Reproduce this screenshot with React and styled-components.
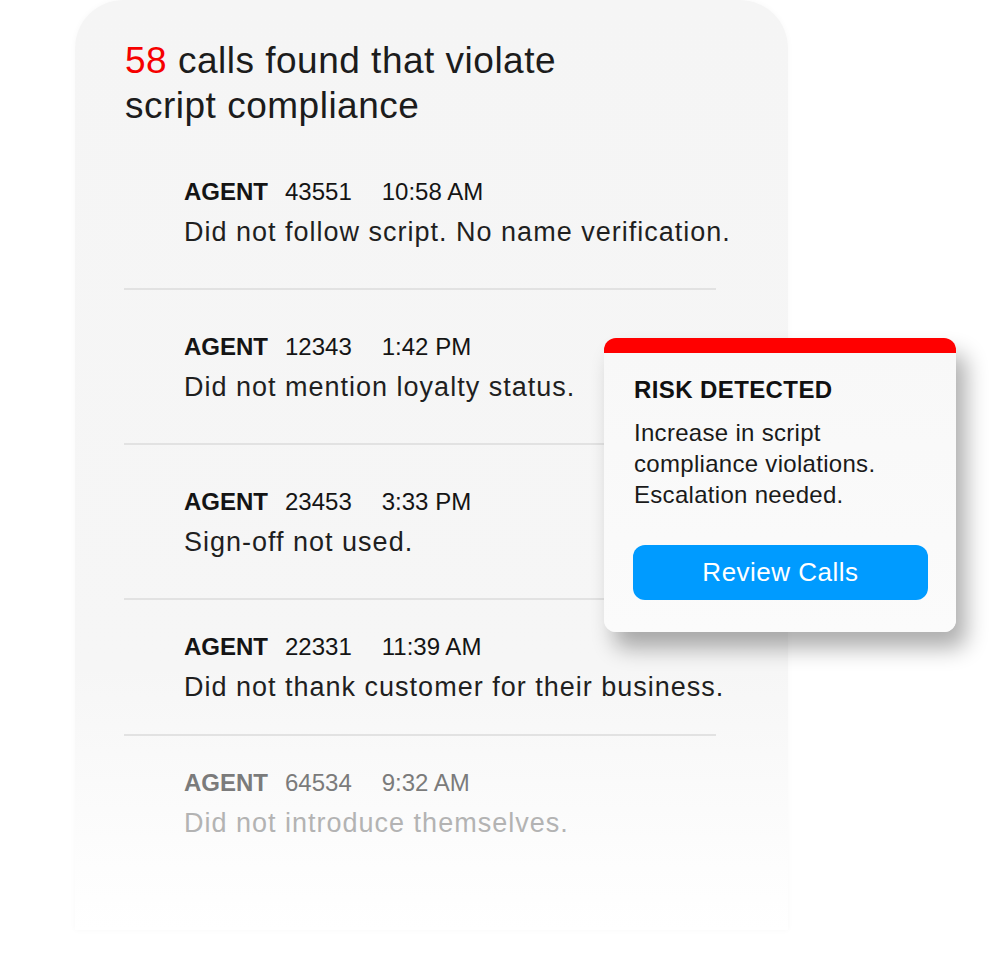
import React from 'react';
import styled, { createGlobalStyle } from 'styled-components';

const GlobalStyle = createGlobalStyle`
  body {
    margin: 0;
    background: #fff;
    font-family: "Liberation Sans", Arial, sans-serif;
  }
`;

const Stage = styled.div`
  position: relative;
  width: 1006px;
  height: 972px;
  overflow: hidden;
`;

const Panel = styled.section`
  margin-left: 75px;
  width: 713px;
  height: 930px;
  border-radius: 48px 48px 0 0;
  background: linear-gradient(to bottom, #f5f5f5 0%, #f6f6f6 72%, #fcfcfc 90%, #ffffff 100%);
  box-shadow: 0 0 6px rgba(0, 0, 0, 0.03);
  padding: 38px 72px 0 49px;
  box-sizing: border-box;
`;

const Title = styled.h1`
  margin: 0 0 50px 1px;
  font-weight: 400;
  font-size: 37px;
  line-height: 45px;
  letter-spacing: 0.5px;
  color: #1c1c1c;
`;

const Count = styled.span`
  color: #f60000;
`;

const List = styled.ul`
  list-style: none;
  margin: 0;
  padding: 0;
`;

const Row = styled.li`
  padding: ${p => (p.$compact ? '33px 0 31px 60px' : '43px 0 40px 60px')};
  border-bottom: 2px solid ${p => (p.$last ? 'transparent' : '#e2e2e2')};
  white-space: nowrap;
  &:first-child {
    padding-top: 0;
  }
`;

const Meta = styled.div`
  display: flex;
  font-size: 24px;
  line-height: 28px;
  color: ${p => (p.$faded ? '#7b7b7b' : '#141414')};
`;

const Agent = styled.span`
  font-weight: 700;
  margin-right: 17px;
`;

const Time = styled.span`
  margin-left: 30px;
`;

const Note = styled.div`
  margin-top: 10px;
  font-size: 27px;
  line-height: 32px;
  letter-spacing: 1px;
  color: ${p => (p.$faded ? '#b3b3b3' : '#1f1f1f')};
`;

const Alert = styled.aside`
  position: absolute;
  left: 604px;
  top: 338px;
  width: 352px;
  height: 294px;
  box-sizing: border-box;
  background: linear-gradient(to bottom, #f8f8f8, #fbfbfb);
  border-radius: 12px;
  border-top: 15px solid #ff0000;
  box-shadow: 10px 16px 22px rgba(0, 0, 0, 0.32);
  padding: 23px 20px 0 30px;
`;

const AlertTitle = styled.div`
  font-weight: 700;
  font-size: 24px;
  line-height: 28px;
  letter-spacing: 0.4px;
  color: #111;
`;

const AlertText = styled.p`
  margin: 13px 0 0;
  font-size: 24px;
  line-height: 31px;
  letter-spacing: 0.3px;
  color: #1a1a1a;
`;

const ReviewButton = styled.button`
  display: block;
  margin: 35px 0 0 -1px;
  width: 295px;
  height: 55px;
  border: none;
  border-radius: 12px;
  background: #009bff;
  color: #fff;
  font-family: inherit;
  font-size: 26px;
  letter-spacing: 0.5px;
  cursor: pointer;
`;

const calls = [
  { id: '43551', time: '10:58 AM', note: 'Did not follow script. No name verification.' },
  { id: '12343', time: '1:42 PM', note: 'Did not mention loyalty status.' },
  { id: '23453', time: '3:33 PM', note: 'Sign-off not used.' },
  { id: '22331', time: '11:39 AM', note: 'Did not thank customer for their business.', compact: true },
  { id: '64534', time: '9:32 AM', note: 'Did not introduce themselves.', compact: true, faded: true },
];

export default function App() {
  return (
    <Stage>
      <GlobalStyle />
      <Panel>
        <Title>
          <Count>58</Count> calls found that violate
          <br />
          script compliance
        </Title>
        <List>
          {calls.map((c, i) => (
            <Row key={c.id} $compact={c.compact} $last={i === calls.length - 1}>
              <Meta $faded={c.faded}>
                <Agent>AGENT</Agent>
                <span>{c.id}</span>
                <Time>{c.time}</Time>
              </Meta>
              <Note $faded={c.faded}>{c.note}</Note>
            </Row>
          ))}
        </List>
      </Panel>
      <Alert>
        <AlertTitle>RISK DETECTED</AlertTitle>
        <AlertText>
          Increase in script
          <br />
          compliance violations.
          <br />
          Escalation needed.
        </AlertText>
        <ReviewButton>Review Calls</ReviewButton>
      </Alert>
    </Stage>
  );
}
